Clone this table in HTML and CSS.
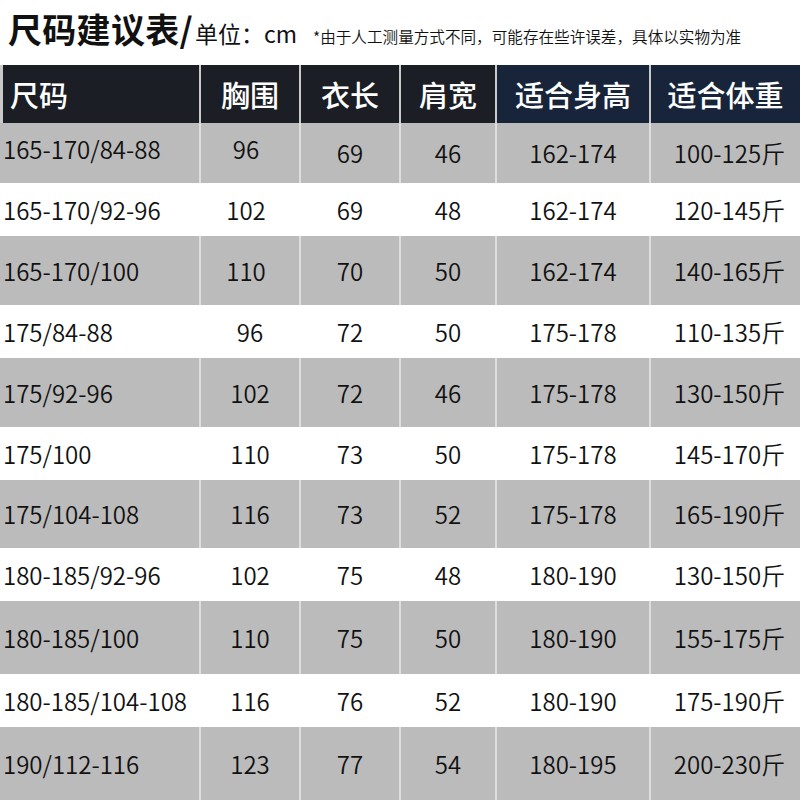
FILE: index.html
```html
<!DOCTYPE html>
<html lang="zh-CN">
<head>
<meta charset="utf-8">
<title>尺码建议表</title>
<link rel="stylesheet" href="styles.css">
</head>
<body>
<div class="page">
  <div class="title">
    <span class="title-main">尺码建议表/</span><span class="title-unit">单位：cm</span><span class="title-note">*由于人工测量方式不同，可能存在些许误差，具体以实物为准</span>
  </div>
  <div class="table">
    <div class="row head">
      <div class="cell first dark">尺码</div>
      <div class="cell dark">胸围</div>
      <div class="cell dark">衣长</div>
      <div class="cell dark">肩宽</div>
      <div class="cell navy">适合身高</div>
      <div class="cell navy">适合体重</div>
    </div>
    <div class="row gray h60 up">
      <div class="cell first">165-170/84-88</div><div class="cell c2">96</div><div class="cell">69</div><div class="cell">46</div><div class="cell">162-174</div><div class="cell c6">100-125斤</div>
    </div>
    <div class="row white h53">
      <div class="cell first">165-170/92-96</div><div class="cell c2">102</div><div class="cell">69</div><div class="cell">48</div><div class="cell">162-174</div><div class="cell c6">120-145斤</div>
    </div>
    <div class="row gray h69">
      <div class="cell first">165-170/100</div><div class="cell c2">110</div><div class="cell">70</div><div class="cell">50</div><div class="cell">162-174</div><div class="cell c6">140-165斤</div>
    </div>
    <div class="row white h53">
      <div class="cell first">175/84-88</div><div class="cell">96</div><div class="cell">72</div><div class="cell">50</div><div class="cell">175-178</div><div class="cell c6">110-135斤</div>
    </div>
    <div class="row gray h69">
      <div class="cell first">175/92-96</div><div class="cell">102</div><div class="cell">72</div><div class="cell">46</div><div class="cell">175-178</div><div class="cell c6">130-150斤</div>
    </div>
    <div class="row white h53">
      <div class="cell first">175/100</div><div class="cell">110</div><div class="cell">73</div><div class="cell">50</div><div class="cell">175-178</div><div class="cell c6">145-170斤</div>
    </div>
    <div class="row gray h68">
      <div class="cell first">175/104-108</div><div class="cell">116</div><div class="cell">73</div><div class="cell">52</div><div class="cell">175-178</div><div class="cell c6">165-190斤</div>
    </div>
    <div class="row white h53">
      <div class="cell first">180-185/92-96</div><div class="cell">102</div><div class="cell">75</div><div class="cell">48</div><div class="cell">180-190</div><div class="cell c6">130-150斤</div>
    </div>
    <div class="row gray h73">
      <div class="cell first">180-185/100</div><div class="cell">110</div><div class="cell">75</div><div class="cell">50</div><div class="cell">180-190</div><div class="cell c6">155-175斤</div>
    </div>
    <div class="row white h53">
      <div class="cell first">180-185/104-108</div><div class="cell">116</div><div class="cell">76</div><div class="cell">52</div><div class="cell">180-190</div><div class="cell c6">175-190斤</div>
    </div>
    <div class="row gray h73">
      <div class="cell first">190/112-116</div><div class="cell">123</div><div class="cell">77</div><div class="cell">54</div><div class="cell">180-195</div><div class="cell c6">200-230斤</div>
    </div>
  </div>
</div>
</body>
</html>
```

FILE: styles.css
```css
* {
  box-sizing: border-box;
}

html, body {
  margin: 0;
  padding: 0;
  background: #ffffff;
}

body {
  font-family: "Noto Sans CJK SC", "Noto Sans", sans-serif;
  color: #111111;
  width: 800px;
  height: 800px;
  overflow: hidden;
}

.page {
  display: flex;
  flex-direction: column;
  width: 800px;
}

.title {
  height: 65px;
  padding: 7px 0 0 8px;
  display: flex;
  align-items: baseline;
  white-space: nowrap;
  line-height: 44px;
}

.title-main {
  font-size: 34px;
  font-weight: 700;
  letter-spacing: 0.3px;
}

.title-unit {
  font-size: 23px;
  font-weight: 400;
  margin-left: 2px;
}

.title-note {
  font-size: 15.6px;
  font-weight: 350;
  margin-left: 16px;
}

.table {
  display: flex;
  flex-direction: column;
}

.row {
  display: grid;
  grid-template-columns: 199px 98px 98px 94px 152px 149px;
  column-gap: 2px;
}

.row.head {
  height: 58px;
  padding-left: 3px;
  grid-template-columns: 196px 98px 98px 94px 152px 149px;
  background: #c9c9c9;
}

.row.gray {
  background: #dedede;
}

.row.white {
  background: #ffffff;
}

.h53 { height: 53px; }
.h60 { height: 60px; }
.h68 { height: 68px; }
.h69 { height: 69px; }
.h73 { height: 73px; }

.cell {
  display: flex;
  align-items: center;
  justify-content: center;
  font-size: 24px;
  font-weight: 350;
  line-height: 1;
  white-space: nowrap;
}

.row.gray .cell {
  background: #bbbbbb;
}

.row.white .cell {
  background: #ffffff;
}

.cell.first {
  justify-content: flex-start;
  padding-left: 3px;
}

.row.head .cell {
  font-size: 29px;
  font-weight: 500;
  color: #ffffff;
}

.row.head .cell.first {
  padding-left: 7px;
}

.cell.dark {
  background: #1b1e24;
}

.cell.navy {
  background: #17243a;
}

.cell.c2 {
  padding-right: 8px;
}

.cell.c6 {
  padding-left: 8px;
}

.row.up .cell.first,
.row.up .cell.c2 {
  padding-bottom: 8px;
}
```
